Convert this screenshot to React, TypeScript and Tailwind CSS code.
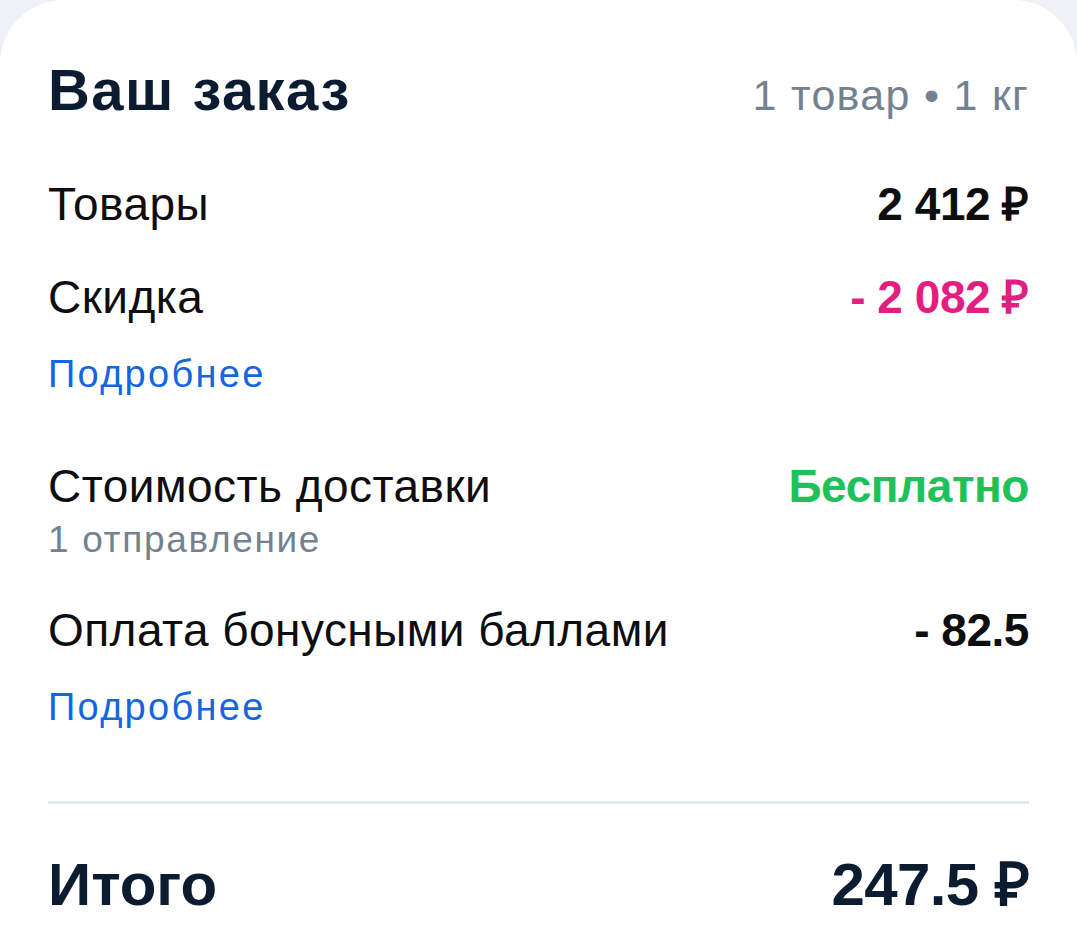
import React from "react";

type Row = {
  label: string;
  value: string;
  valueClass: string;
  sub?: string;
  more?: boolean;
};

function SummaryRow({ row, className }: { row: Row; className: string }) {
  return (
    <div className={className}>
      <div className="flex flex-row justify-between items-baseline">
        <span className="text-[46px] leading-[56px] tracking-[0.01em] text-[#0e0e10]">{row.label}</span>
        <span className={"text-[46px] leading-[56px] font-bold tracking-[-0.01em] " + row.valueClass}>
          {row.value}
        </span>
      </div>
      {row.sub && (
        <div className="mt-[4px] text-[37px] leading-[44px] tracking-[0.045em] text-[#748290]">{row.sub}</div>
      )}
      {row.more && (
        <div className="mt-[27px] text-[38px] leading-[44px] tracking-[0.06em] text-[#1565e0]">Подробнее</div>
      )}
    </div>
  );
}

export default function App() {
  const rows: Row[] = [
    { label: "Товары", value: "2 412 ₽", valueClass: "text-[#0e0e10]" },
    { label: "Скидка", value: "- 2 082 ₽", valueClass: "text-[#e21e80]", more: true },
    { label: "Стоимость доставки", value: "Бесплатно", valueClass: "text-[#1fc25a]", sub: "1 отправление" },
    { label: "Оплата бонусными баллами", value: "- 82.5", valueClass: "text-[#0e0e10]", more: true },
  ];
  const gaps = ["mt-[51px]", "mt-[37px]", "mt-[62px]", "mt-[40px]"];

  return (
    <div className="min-h-screen bg-[#eef1f6] font-['Liberation_Sans',Arial,sans-serif]">
      <div className="min-h-screen bg-white rounded-t-[64px] px-[48px] pt-[55px] pb-[20px]">
        {/* Header */}
        <div className="flex flex-row justify-between items-baseline">
          <h1 className="text-[58px] leading-[70px] font-extrabold tracking-[0.025em] text-[#0b1b30]">Ваш заказ</h1>
          <span className="text-[43px] leading-[56px] tracking-[0.03em] text-[#748290]">1 товар • 1 кг</span>
        </div>

        {rows.map((row, i) => (
          <SummaryRow key={row.label} row={row} className={gaps[i]} />
        ))}

        {/* Total */}
        <div className="mt-[72px] h-[3px] bg-[#e3e8ef]" />
        <div className="mt-[45px] flex flex-row justify-between items-baseline">
          <span className="text-[60px] leading-[72px] font-extrabold text-[#0b1b30]">Итого</span>
          <span className="text-[60px] leading-[72px] font-extrabold tracking-[-0.01em] text-[#0b1b30]">247.5 ₽</span>
        </div>
      </div>
    </div>
  );
}
